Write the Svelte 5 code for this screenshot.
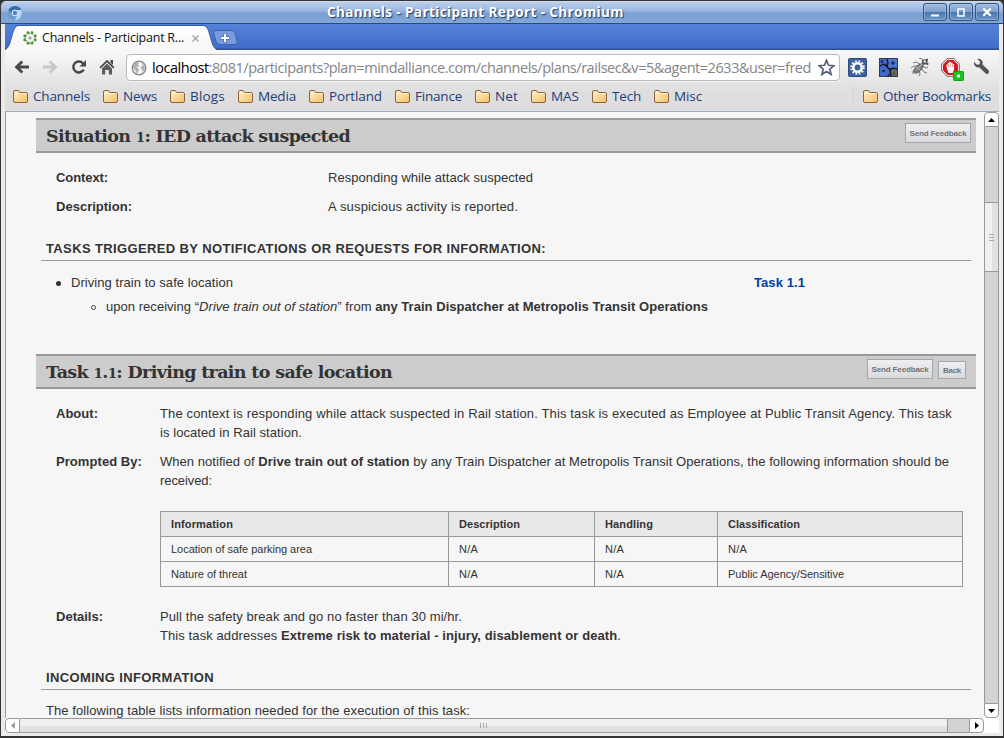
<script>
  const bookmarks = [
    ['Channels', 57], ['News', 34], ['Blogs', 35], ['Media', 38], ['Portland', 53],
    ['Finance', 47], ['Net', 23], ['MAS', 28], ['Tech', 29], ['Misc', 28]
  ];

  const rows = [
    ['Location of safe parking area', 141, 'N/A', 'N/A', 'N/A', 19],
    ['Nature of threat', 76, 'N/A', 'N/A', 'Public Agency/Sensitive', 116]
  ];

  // Spreads a run of text evenly over a given width.
  function fit(node, width) {
    const natural = node.getBoundingClientRect().width;
    node.style.letterSpacing = `${(width - natural) / node.textContent.length}px`;
  }
</script>

{#snippet folder()}
  <svg class="folder" width="15" height="13" viewBox="0 0 15 13">
    <defs>
      <linearGradient id="fold" x1="0" y1="0" x2="1" y2="1">
        <stop offset="0" stop-color="#fff0c8" /><stop offset="1" stop-color="#f8bf66" />
      </linearGradient>
    </defs>
    <path d="M.5 11V2Q.5.5 2 .5H5.3L6.7 2.5H13Q14.5 2.5 14.5 4V11Q14.5 12.5 13 12.5H2Q.5 12.5.5 11Z" fill="url(#fold)" stroke="#886342" />
    <path d="M1.5 3.5H13.5" stroke="#fff3d3" />
  </svg>
{/snippet}

<div class="window">
  <header class="titlebar">
    <svg class="app-icon" width="16" height="16" viewBox="0 0 16 16">
      <circle cx="8" cy="8" r="7" fill="#6c9bd0" />
      <path d="M1.5 5Q4 1 8 1Q12.5 1 14.4 5H8Q5 5 4.5 8Z" fill="#376fac" />
      <path d="M14.5 5Q16 10 12 13.7Q10 15 7.6 15L11 9.5Q12 7 10 5Z" fill="#bcd5f0" />
      <circle cx="8" cy="8" r="3.3" fill="#dcecff" /><circle cx="8" cy="8" r="2.3" fill="#4b86cb" />
    </svg>
    <span class="title"><span use:fit={297}>Channels - Participant Report - Chromium</span></span>
    <div class="controls">
      <i><svg width="22" height="16"><path d="M7 11.5H15" stroke="#fff" stroke-width="2" /></svg></i>
      <i><svg width="22" height="16"><path d="M8 5H14V12H8Z" fill="none" stroke="#fff" stroke-width="1.5" /></svg></i>
      <i><svg width="22" height="16"><path d="M7.3 4.5L14.7 11.8M14.7 4.5L7.3 11.8" stroke="#fff" stroke-width="2.2" /></svg></i>
    </div>
  </header>

  <div class="frame">
    <div class="tabstrip">
      <svg class="tabshape" width="240" height="26" viewBox="0 0 240 26">
        <defs>
          <linearGradient id="tabfill" x1="0" y1="0" x2="0" y2="1"><stop offset="0" stop-color="#fff" /><stop offset="1" stop-color="#f7f7f7" /></linearGradient>
        </defs>
        <path d="M0 26C4 24 5 19 7 12C9 5 10 2 14 2H198C202 2 203 5 205 12C207 19 208 24 212 26Z" fill="url(#tabfill)" />
        <path d="M0 25.5C4 24 5 19 7 12C9 5 10 1.5 14 1.5H198C202 1.5 203 5 205 12C207 19 208 24 212 25.5" fill="none" stroke="#284c91" opacity=".75" />
        <path d="M211 6.5H226Q229 6.5 230 9L232 17Q233 20.5 230 20.5H215Q212 20.5 211 17L208.5 9Q208 6.5 211 6.5Z" fill="#789bdc" stroke="#3d62aa" />
        <path d="M215.500 14H224.500M220 9.500V18.500" stroke="#4a6fb8" stroke-width="3.400" /><path d="M216 14H224M220 10V18" stroke="#fff" stroke-width="2" />
      </svg>
      <div class="tab">
        <svg width="14" height="14" viewBox="0 0 14 14">
          <circle cx="7" cy="7" r="4.6" fill="none" stroke="#8fb87a" stroke-width="1.6" stroke-dasharray="2 1.2" />
          <g fill="#4e902f"><circle cx="5" cy="1.700" r="1.4" /><circle cx="9" cy="1.700" r="1.4" /><circle cx="5" cy="12.300" r="1.4" /><circle cx="9" cy="12.300" r="1.4" /><circle cx="1.700" cy="5" r="1.4" /><circle cx="1.700" cy="9" r="1.4" /><circle cx="12.300" cy="5" r="1.4" /><circle cx="12.300" cy="9" r="1.4" /></g>
          <circle cx="7" cy="7" r="1.7" fill="#a99ac8" />
        </svg>
        <span class="tabtext"><span use:fit={142}>Channels - Participant R...</span></span>
        <svg width="9" height="9"><path d="M1.500 1.500L7.500 7.500M7.500 1.500L1.500 7.500" stroke="#aaa" stroke-width="1.500" /></svg>
      </div>
    </div>

    <div class="chrome">
      <nav class="toolbar">
        <svg width="16" height="16" viewBox="0 0 16 16"><path d="M15 8H3M8.300 2.500L2.500 8L8.300 13.500" fill="none" stroke="#484848" stroke-width="2.800" /></svg>
        <svg width="16" height="16" viewBox="0 0 16 16"><path d="M1 8H13M7.700 2.500L13.500 8L7.700 13.500" fill="none" stroke="#c8c8c8" stroke-width="2.800" /></svg>
        <svg width="16" height="16" viewBox="0 0 16 16"><path d="M12.700 10.600A5.500 5.500 0 1 1 12 4.300" fill="none" stroke="#484848" stroke-width="2.500" /><path d="M15 1V7.500H8.500Z" fill="#484848" /></svg>
        <svg width="16" height="16" viewBox="0 0 16 16"><path d="M8 .8L15.500 8.300L14.300 9.500L8 3.300L1.700 9.500L.5 8.300Z" fill="#484848" /><path d="M11.500 1H14V6L11.500 3.600Z" fill="#484848" /><path d="M3 9.400L8 4.500L13 9.400V15.500H9.800V11H6.200V15.500H3Z" fill="#5c5c5c" /></svg>
        <div class="omnibox">
          <svg width="16" height="16" viewBox="0 0 16 16">
            <circle cx="8" cy="8" r="6.800" fill="#f4f4f4" stroke="#858585" stroke-width="1.300" />
            <path d="M2 5L5 2.300L8 2L7 4.500L8.500 6L5.500 7.500L8 9L7.500 11L6 14L4.500 10.500L2 8ZM10 3L13 5L14 8.500L12 12L10.500 9L9.500 7L12 5.500Z" fill="#b2b2b2" />
          </svg>
          <span class="url"><span use:fit={659}><b>localhost</b>:8081/participants?plan=mindalliance.com/channels/plans/railsec&amp;v=5&amp;agent=2633&amp;user=fred</span></span>
          <svg width="17" height="17" viewBox="0 0 17 17"><path d="M8.500 1.300L10.600 6.300L15.900 6.700L11.800 10.200L13.100 15.400L8.500 12.600L3.900 15.400L5.200 10.200L1.100 6.700L6.400 6.300Z" fill="#fff" stroke="#536079" stroke-width="1.700" /></svg>
        </div>
        <div class="extensions">
          <svg width="19" height="19" viewBox="0 0 19 19">
            <rect x=".5" y=".5" width="18" height="18" rx="1" fill="#3c609b" stroke="#2d4d83" />
            <circle cx="9.500" cy="9.500" r="6.300" fill="none" stroke="#f2f2ec" stroke-width="2" stroke-dasharray="1.800 1.500" />
            <circle cx="9.500" cy="9.500" r="4.200" fill="none" stroke="#fafaf5" stroke-width="2.600" />
          </svg>
          <svg width="19" height="19" viewBox="0 0 19 19">
            <rect x=".5" y=".5" width="18" height="18" fill="#252b37" />
            <g fill="none"><circle cx="4.500" cy="13" r="3.600" stroke="#4169cf" stroke-width="4.500" /><circle cx="3" cy="3.500" r="3.200" stroke="#4169cf" stroke-width="3.500" /><circle cx="14" cy="5" r="4" stroke="#4b73dc" stroke-width="4.500" /><circle cx="15" cy="15.500" r="2.800" stroke="#666" stroke-width="4" /></g>
            <path d="M1 8L5 6L8 9L11 12L12 18M8 1L9 5L8 9M11 11L15 10L18 11" stroke="#15191f" stroke-width="1.300" fill="none" />
            <rect x=".5" y=".5" width="18" height="18" fill="none" stroke="#343b4a" />
          </svg>
          <svg width="19" height="19" viewBox="0 0 19 19">
            <g fill="none" stroke="#777" stroke-width="1"><path d="M10 6L6 4L3 5M8 8L4 8L1 10M6 11L3 13L3 16M12 8L16 10L18 9M11 10L14 14L17 15M9 12L10 16L9 18M13 5L12 1L9 0M15 6L18 3" /></g>
            <ellipse cx="8.500" cy="10.500" rx="6" ry="2.900" transform="rotate(-45 8.500 10.500)" fill="#7b827f" stroke="#555" stroke-width=".8" />
            <circle cx="14.500" cy="4" r="2.700" fill="#555" /><circle cx="14.700" cy="3.400" r="1.2" fill="#eee" /><circle cx="17" cy="1.700" r="1" fill="#333" /><circle cx="17.500" cy="6" r="1" fill="#333" /><path d="M6 12L12 6M6 9L10 12" stroke="#b9bdbb" />
          </svg>
          <svg width="24" height="24" viewBox="0 0 24 24">
            <path d="M6 .7H13L18.300 6V13L13 18.300H6L.7 13V6Z" fill="#fff" stroke="#9b4848" />
            <path d="M6.500 2H12.500L17 6.500V12.500L12.500 17H6.500L2 12.500V6.500Z" fill="#d71920" />
            <path d="M5.500 9V6.500H7V4.700H8.500V3.800H10V4.700H11.500V6H13V12L11.500 15H7.500Z" fill="#fff" /><path d="M7.500 6V9M9.500 5V9M11.500 6V9" stroke="#dc6b6d" stroke-width=".6" />
            <rect x="12.500" y="13.500" width="10" height="9" rx="1" fill="#18c51c" stroke="#0ba313" /><rect x="16" y="16.500" width="3" height="3" rx="1" fill="#fff" />
          </svg>
          <svg width="17" height="17" viewBox="0 0 17 17"><path d="M4.200 1Q7 .2 9 2.500Q10.200 4.200 9.500 6.600L15.700 12.500Q16.500 14 15.500 15.200Q14 16.500 12.600 15.400L6.500 9.400Q3.500 10 1.700 7.700Q.4 5.600 1.200 4L4 6.700L6.600 6.200L7 3.600Z" fill="#555" /></svg>
        </div>
      </nav>

      <nav class="bookmarks">
        {#each bookmarks as [name, width]}
          <span class="bookmark">{@render folder()}<span class="slot" style:width="{width}px"><span use:fit={width}>{name}</span></span></span>
        {/each}
        <span class="divider"></span>
        <span class="bookmark">{@render folder()}<span class="slot other"><span use:fit={108}>Other Bookmarks</span></span></span>
      </nav>
    </div>

    <div class="viewport">
      <main>
        <div class="bar">
          <h2><span use:fit={304}>Situation <small>1</small>: IED attack suspected</span></h2>
          <button><span use:fit={57}>Send Feedback</span></button>
        </div>
        <dl class="wide">
          <dt><span use:fit={52}>Context:</span></dt><dd><span use:fit={205}>Responding while attack suspected</span></dd>
          <dt><span use:fit={76}>Description:</span></dt><dd><span use:fit={190}>A suspicious activity is reported.</span></dd>
        </dl>
        <h3><span use:fit={500}>TASKS TRIGGERED BY NOTIFICATIONS OR REQUESTS FOR INFORMATION:</span></h3>
        <ul>
          <li>
            <div class="task"><i class="dot"></i><span use:fit={162}>Driving train to safe location</span><a href="#task"><span use:fit={51}>Task 1.1</span></a></div>
            <ul class="inner">
              <li class="task"><i class="dot ring"></i><span use:fit={602}>upon receiving “<em>Drive train out of station</em>” from <b>any Train Dispatcher at Metropolis Transit Operations</b></span></li>
            </ul>
          </li>
        </ul>

        <div class="bar" id="task">
          <h2><span use:fit={346}>Task <small>1</small>.<small>1</small>: Driving train to safe location</span></h2>
          <button><span use:fit={57}>Send Feedback</span></button>
          <button class="back"><span use:fit={18}>Back</span></button>
        </div>
        <dl>
          <dt><span use:fit={42}>About:</span></dt>
          <dd><span use:fit={792}>The context is responding while attack suspected in Rail station. This task is executed as Employee at Public Transit Agency. This task</span><br /><span use:fit={142}>is located in Rail station.</span></dd>
          <dt><span use:fit={86}>Prompted By:</span></dt>
          <dd>
            <span use:fit={789}>When notified of <b>Drive train out of station</b> by any Train Dispatcher at Metropolis Transit Operations, the following information should be</span><br /><span use:fit={52}>received:</span>
            <table>
              <colgroup><col class="c1" /><col class="c2" /><col class="c3" /><col class="c4" /></colgroup>
              <thead>
                <tr><th><span use:fit={62}>Information</span></th><th><span use:fit={61}>Description</span></th><th><span use:fit={48}>Handling</span></th><th><span use:fit={72}>Classification</span></th></tr>
              </thead>
              <tbody>
                {#each rows as [info, infoWidth, description, handling, level, levelWidth]}
                  <tr><td><span use:fit={infoWidth}>{info}</span></td><td><span use:fit={19}>{description}</span></td><td><span use:fit={19}>{handling}</span></td><td><span use:fit={levelWidth}>{level}</span></td></tr>
                {/each}
              </tbody>
            </table>
          </dd>
          <dt><span use:fit={47}>Details:</span></dt>
          <dd><span use:fit={302}>Pull the safety break and go no faster than 30 mi/hr.</span><br /><span use:fit={461}>This task addresses <b>Extreme risk to material - injury, disablement or death</b>.</span></dd>
        </dl>
        <h3><span use:fit={168}>INCOMING INFORMATION</span></h3>
        <p><span use:fit={424}>The following table lists information needed for the execution of this task:</span></p>
      </main>

      <div class="vscroll">
        <div class="cap up"><svg width="7" height="4"><path d="M0 4L3.500 0L7 4Z" /></svg></div>
        <div class="vtrack"><div class="vthumb"><i></i><i></i><i></i></div></div>
        <div class="cap down"><svg width="7" height="4"><path d="M0 0H7L3.500 4Z" /></svg></div>
      </div>
      <div class="hscroll">
        <div class="cap left"><svg width="4" height="7"><path d="M4 0V7L0 3.500Z" fill="#999" /></svg></div>
        <div class="hthumb"><i></i><i></i><i></i></div>
        <div class="htrack"></div>
        <div class="cap right"><svg width="4" height="7"><path d="M0 0L4 3.500L0 7Z" /></svg></div>
      </div>
      <div class="corner"></div>
    </div>
  </div>
</div>

<style>
  :global(body) { background: #252326; overflow: hidden; }
  * { box-sizing: border-box; }
  svg { display: block; flex: none; }
  span { white-space: nowrap; }
  .window { width: 1004px; height: 738px; padding: 1px 1px 2px; background: #363334; display: flex; flex-direction: column; }
  .titlebar {
    height: 23px; flex: none; display: grid; grid-template-columns: 75px 1fr 75px; align-items: center; padding: 0 5px 0 6px;
    background: linear-gradient(#d0ddf0 0, #b7cce9 2px, #a5c0e5 7px, #8eafdc 11px, #7aa0d2 12px, #80a7d8 22px, #2d4872 22px);
    border-radius: 5px 5px 0 0;
  }
  .title { text-align: center; font: bold 13.500px/20px "Open Sans", sans-serif; color: #fff; text-shadow: 1px 1px 1px #1c3761; padding-right: 54px; margin-top: -1px; }
  .title span, .tabtext span, .url span, .slot span { display: inline-block; }
  .controls { display: flex; gap: 2px; margin-top: -1px; }
  .controls i { width: 24px; height: 18px; flex: none; border: 1px solid #33557f; border-radius: 3px; background: linear-gradient(#a4bde0, #7b9fcc 49%, #4b76aa 50%, #6b97cb); box-shadow: inset 0 0 0 1px #a9c2e580; }

  .frame { flex: 1; min-height: 0; background: #edebea; padding: 0 4px 3px; display: flex; flex-direction: column; }
  .tabstrip { height: 26px; flex: none; position: relative; background: linear-gradient(#5583d8, #406dc9 92%, #2d4f96 96%); }
  .tabshape { position: absolute; left: 0; top: 0; }
  .tab { position: relative; height: 26px; padding: 2px 0 0 18px; display: flex; align-items: center; }
  .tabtext { width: 142px; margin: 0 7px 0 5px; font: 12.500px/20px "Open Sans", sans-serif; color: #111; }
  .chrome { height: 62px; flex: none; background: linear-gradient(#f8f8f8, #dedede 70%); border-bottom: 1px solid #9fadbc; }
  .toolbar { height: 34px; display: flex; align-items: center; padding-left: 9px; }
  .toolbar > svg { margin-right: 12.400px; }
  .omnibox { width: 714px; height: 27px; margin: 1px 0 0 -1.600px; border: 1px solid #b9b9b9; border-radius: 4px; background: #fff; display: flex; align-items: center; padding: 0 4px; box-shadow: 0 1px #f4f4f4; }
  .url { width: 666px; margin-left: 5px; color: #858585; font: 14.500px/22px "Open Sans", sans-serif; }
  .url b { color: #000; font-weight: 400; }
  .extensions { display: flex; align-items: flex-start; gap: 12px; margin: 3px 0 0 8px; height: 22px; }
  .extensions svg:nth-child(4) { margin-right: -4px; }
  .bookmarks { height: 24px; display: flex; align-items: center; padding: 0 8px; gap: 13px; font: 13.500px/20px "Open Sans", sans-serif; color: #1d3d7c; }
  .bookmark { display: flex; align-items: center; }
  .folder { margin-right: 5px; }
  .slot { display: block; }
  .other { width: 108px; }
  .divider { width: 1px; height: 23px; margin-left: auto; margin-right: -4px; background: #c8d4ef; }

  .viewport { flex: 1; min-height: 0; display: grid; grid-template: minmax(0, 1fr) 15px / minmax(0, 1fr) 15px; background: #fff; }
  main { border-left: 1px solid #999; background: #f6f6f6; overflow: hidden; padding: 6px 8px 0 30px; color: #333; font: 13px/19px "Liberation Sans", Arial, sans-serif; }
  main span { display: inline-block; }
  .bar { height: 35px; border: 2px solid #999; border-width: 2px 0; background: #ccc; display: flex; align-items: flex-end; padding: 0 5px 8px 10px; gap: 5px; }
  h2 { margin: 0 auto -9px 0; font: bold 17.500px/30px "DejaVu Serif", serif; }
  h2 small { font-size: 13.500px; }
  button { width: 66px; height: 20px; padding: 0; border: 1px solid #a5a6ab; background: linear-gradient(#efeff1, #d9dadd); color: #727377; font: bold 8px/17px "Liberation Sans", Arial, sans-serif; display: flex; justify-content: center; align-items: center; }
  .back { width: 28px; height: 18px; margin-right: 5px; }
  dl { margin: 15px 0 0; padding-left: 20px; display: grid; grid-template-columns: 104px 1fr; row-gap: 10px; }
  .wide { grid-template-columns: 272px 1fr; }
  dt { font-weight: bold; }
  dd { margin: 0; }
  h3 { margin: 22px 5px 0; padding-left: 5px; height: 23px; border-bottom: 1px solid #999; font: bold 13px/22px "Liberation Sans", Arial, sans-serif; }
  ul { margin: 12px 0 38px; padding: 0 0 0 20px; list-style: none; }
  .inner { margin: 5px 0 0; padding-left: 35px; }
  .task { display: flex; align-items: center; height: 19px; padding-left: 15px; }
  .dot { width: 5px; height: 5px; border-radius: 50%; background: #333; margin: 1px 10px 0 -15px; flex: none; }
  .ring { background: none; border: 1px solid #444; }
  a { margin-left: 521px; color: #003da5; font-weight: bold; text-decoration: none; }
  table { width: 803px; margin: 21px 0 10px; table-layout: fixed; border-collapse: collapse; font-size: 11px; line-height: 14px; }
  th, td { height: 25px; border: 1px solid #999; padding: 0 10px; text-align: left; }
  th { background: #e8e8e8; }
  .c1 { width: 288px; } .c2 { width: 146px; } .c3 { width: 123px; } .c4 { width: 245px; }
  p { margin: 11px 0 0 10px; }

  .cap { background: #fff; border: 1px solid #999; display: grid; place-items: center; flex: none; }
  .vscroll { display: flex; flex-direction: column; }
  .up, .down { width: 15px; height: 15px; }
  .up { border-radius: 4px 4px 0 0; } .down { border-radius: 0 0 4px 4px; }
  .vtrack { flex: 1; background: #d3d3d3; border: 1px solid #999; border-width: 0 1px; padding-top: 75px; }
  .vthumb { height: 70px; border: 1px solid #999; border-width: 1px 0; background: linear-gradient(90deg, #f0f0f0 54%, #e1e1e1 54%); display: flex; flex-direction: column; align-items: center; justify-content: center; gap: 2px; }
  .vthumb i { width: 5px; height: 1px; background: #aaa; }
  .hscroll { display: flex; }
  .left, .right { width: 15px; height: 15px; }
  .left { border-radius: 4px 0 0 4px; } .right { border-radius: 0 4px 4px 0; }
  .hthumb { width: 928px; border: 1px solid #999; border-left: 0; background: linear-gradient(#f0f0f0 54%, #e1e1e1 54%); display: flex; align-items: center; justify-content: center; gap: 2px; }
  .hthumb i { width: 1px; height: 5px; background: #aaa; }
  .htrack { flex: 1; background: #d3d3d3; border: 1px solid #999; border-width: 1px 0; }
</style>
